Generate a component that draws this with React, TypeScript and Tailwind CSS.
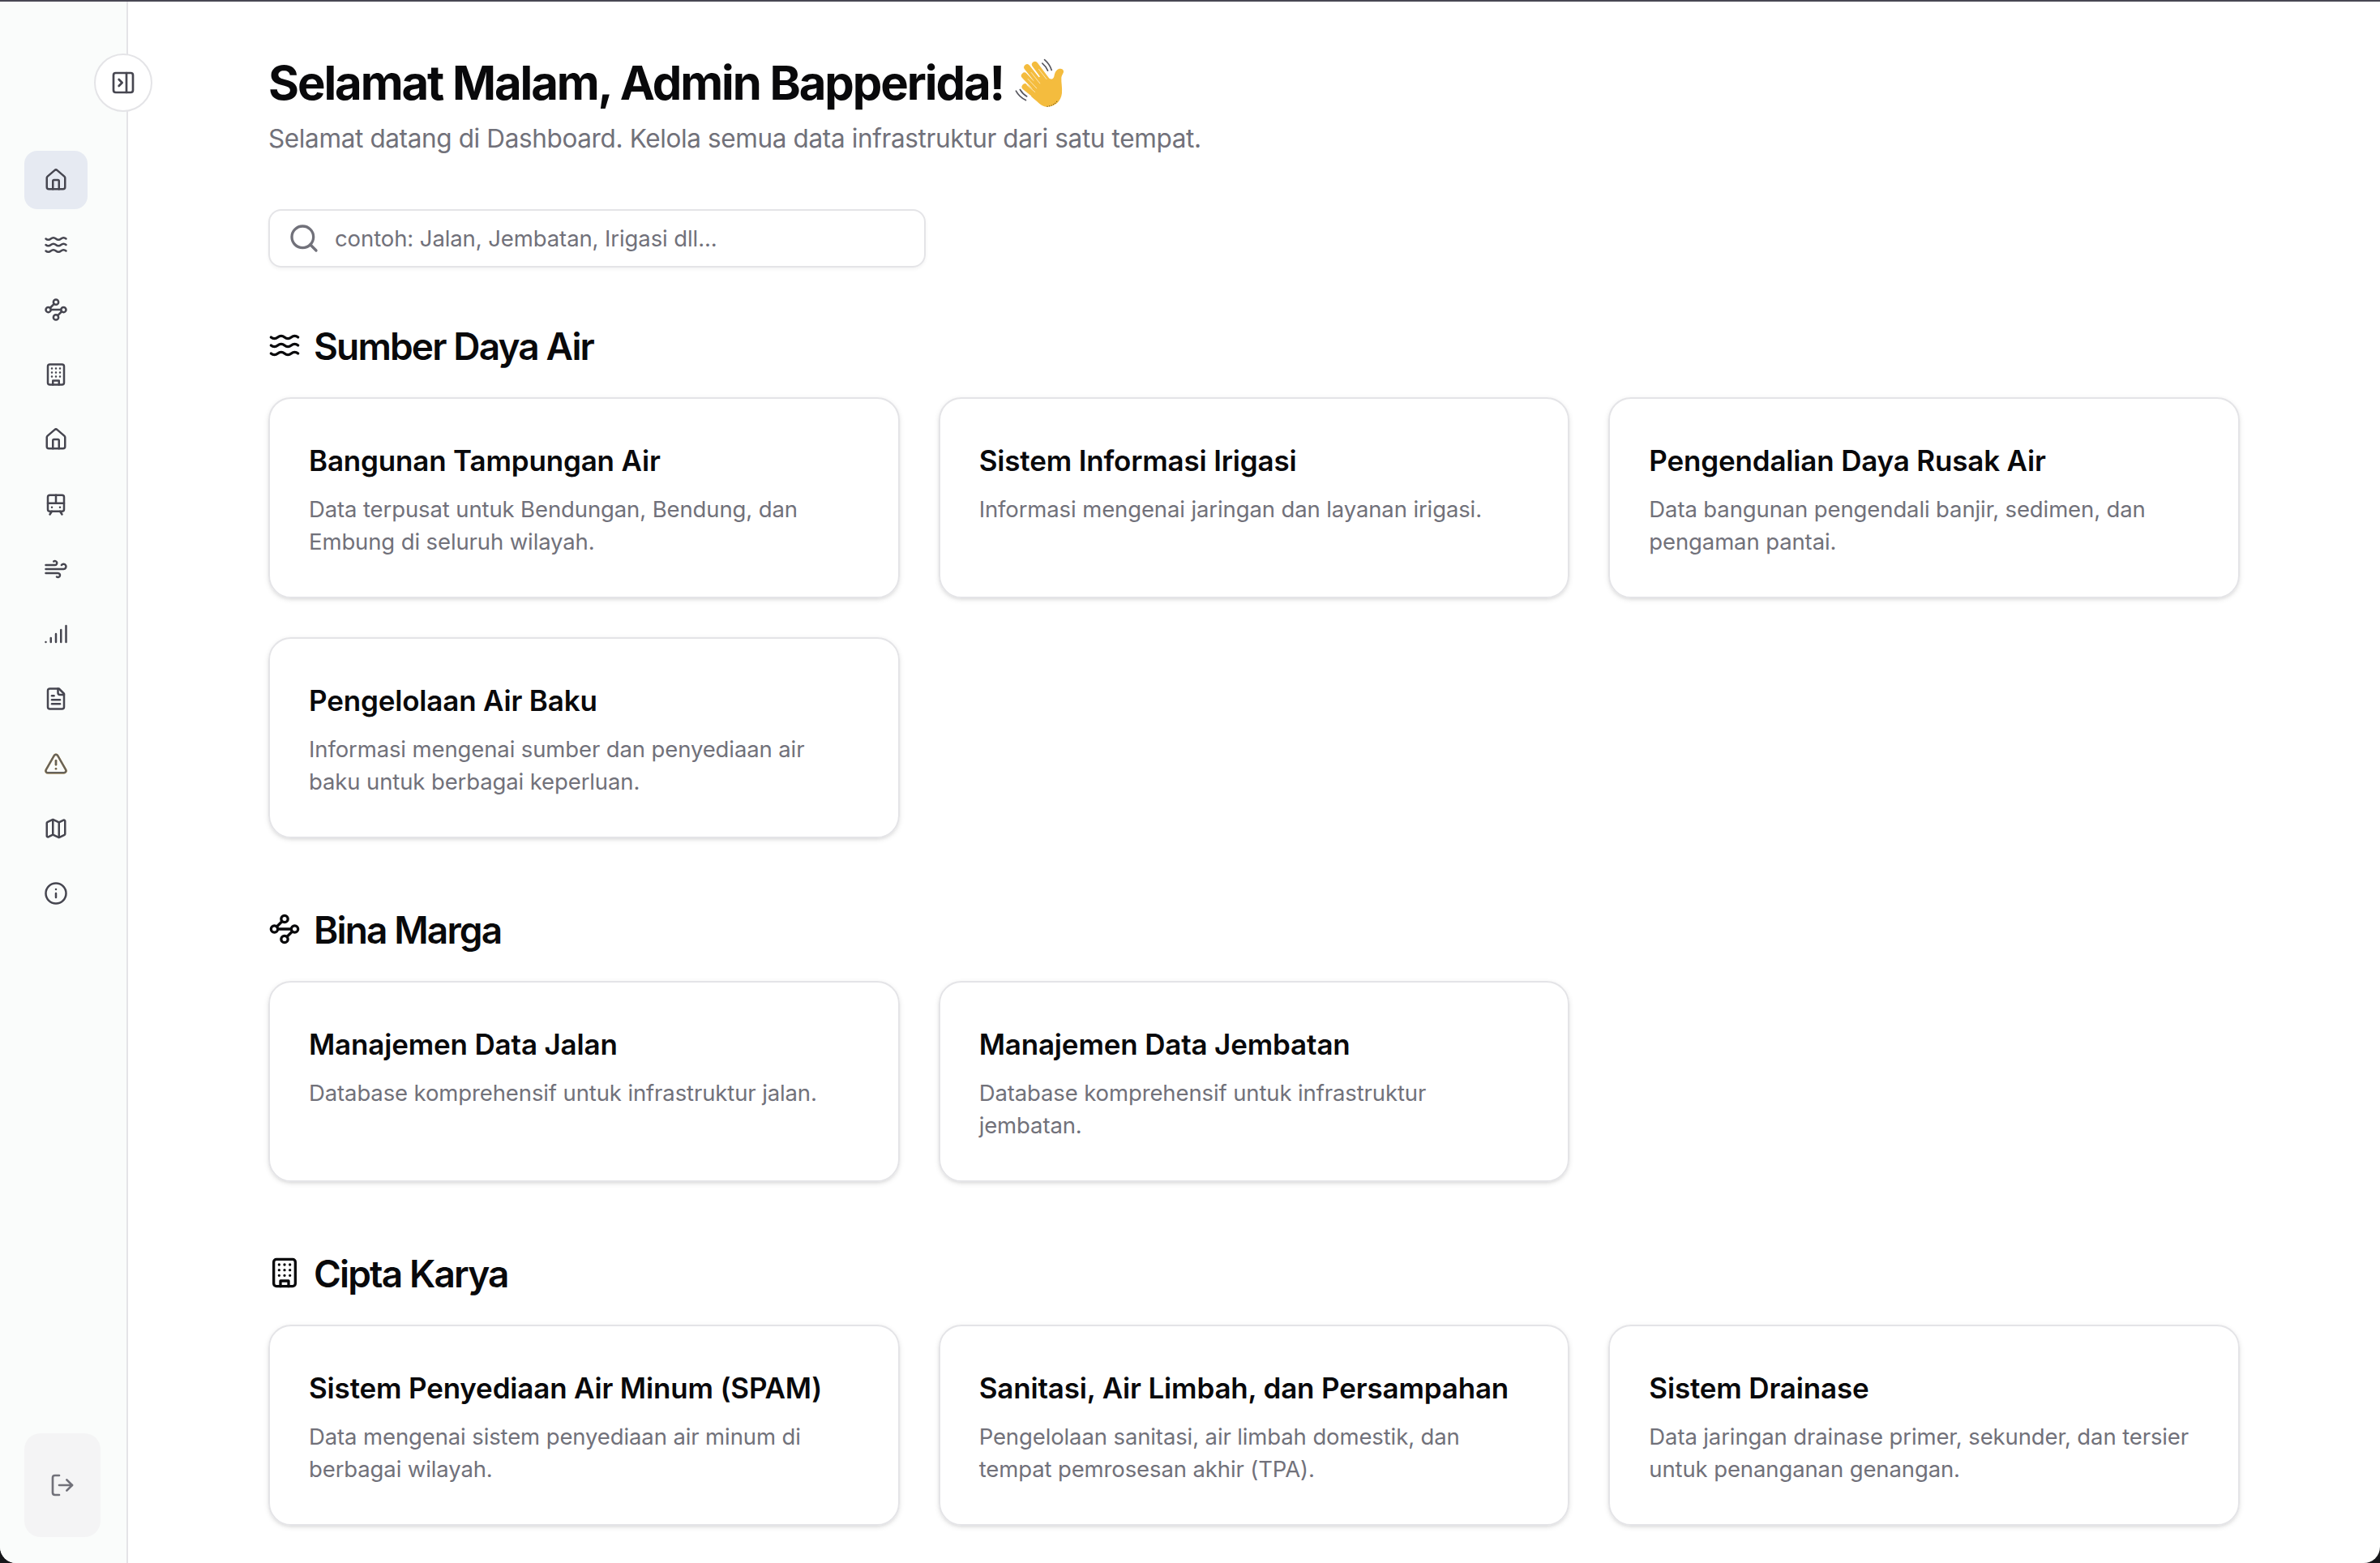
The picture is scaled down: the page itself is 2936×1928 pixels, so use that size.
import React from "react";
import { House, Waves, TramFront, Wind, Signal, TriangleAlert, Map as MapIcon, Info, LogOut, PanelRightClose, Search } from "lucide-react";

type IconProps = { size?: number; className?: string };

function Glyph({ size = 24, className, children }: IconProps & { children: React.ReactNode }) {
  return (
    <svg width={size} height={size} viewBox="0 0 24 24" fill="none" stroke="currentColor" strokeWidth="2" strokeLinecap="round" strokeLinejoin="round" className={className}>
      {children}
    </svg>
  );
}

const Waypoints = (p: IconProps) => (
  <Glyph {...p}>
    <circle cx="12" cy="4.5" r="2.5" />
    <path d="m10.2 6.3-3.9 3.9" />
    <circle cx="4.5" cy="12" r="2.5" />
    <path d="M7 12h10" />
    <circle cx="19.5" cy="12" r="2.5" />
    <path d="m13.8 17.7 3.9-3.9" />
    <circle cx="12" cy="19.5" r="2.5" />
  </Glyph>
);

const Building = (p: IconProps) => (
  <Glyph {...p}>
    <rect width="16" height="20" x="4" y="2" rx="2" />
    <path d="M9 22v-4h6v4" />
    <path d="M8 6h.01M16 6h.01M12 6h.01M12 10h.01M12 14h.01M16 10h.01M16 14h.01M8 10h.01M8 14h.01" />
  </Glyph>
);

const FileText = (p: IconProps) => (
  <Glyph {...p}>
    <path d="M15 2H6a2 2 0 0 0-2 2v16a2 2 0 0 0 2 2h12a2 2 0 0 0 2-2V7Z" />
    <path d="M14 2v4a2 2 0 0 0 2 2h4" />
    <path d="M10 9H8" />
    <path d="M16 13H8" />
    <path d="M16 17H8" />
  </Glyph>
);

const Warning = (p: IconProps) => (
  <TriangleAlert {...p} className="text-[#65625c] drop-shadow-[0.6px_0.8px_0px_#f5b02e]" />
);

const nav: React.ElementType[] = [House, Waves, Waypoints, Building, House, TramFront, Wind, Signal, FileText, Warning, MapIcon, Info];

type Card = { title: string; lines: string[] };
type Section = { title: string; icon: React.ElementType; cards: Card[] };

const sections: Section[] = [
  {
    title: "Sumber Daya Air",
    icon: Waves,
    cards: [
      { title: "Bangunan Tampungan Air", lines: ["Data terpusat untuk Bendungan, Bendung, dan", "Embung di seluruh wilayah."] },
      { title: "Sistem Informasi Irigasi", lines: ["Informasi mengenai jaringan dan layanan irigasi."] },
      { title: "Pengendalian Daya Rusak Air", lines: ["Data bangunan pengendali banjir, sedimen, dan", "pengaman pantai."] },
      { title: "Pengelolaan Air Baku", lines: ["Informasi mengenai sumber dan penyediaan air", "baku untuk berbagai keperluan."] },
    ],
  },
  {
    title: "Bina Marga",
    icon: Waypoints,
    cards: [
      { title: "Manajemen Data Jalan", lines: ["Database komprehensif untuk infrastruktur jalan."] },
      { title: "Manajemen Data Jembatan", lines: ["Database komprehensif untuk infrastruktur", "jembatan."] },
    ],
  },
  {
    title: "Cipta Karya",
    icon: Building,
    cards: [
      { title: "Sistem Penyediaan Air Minum (SPAM)", lines: ["Data mengenai sistem penyediaan air minum di", "berbagai wilayah."] },
      { title: "Sanitasi, Air Limbah, dan Persampahan", lines: ["Pengelolaan sanitasi, air limbah domestik, dan", "tempat pemrosesan akhir (TPA)."] },
      { title: "Sistem Drainase", lines: ["Data jaringan drainase primer, sekunder, dan tersier", "untuk penanganan genangan."] },
    ],
  },
];

function WavingHand() {
  return (
    <svg viewBox="44 32 182 182" className="h-[61px] w-[61px]" fill="none" strokeLinecap="round">
      <g stroke="#f4bc3e" strokeWidth="23">
        <path d="M118 55 L165 118" />
        <path d="M89 65 L142 132" />
        <path d="M79 96 L130 150" />
        <path d="M81 137 L130 176" />
      </g>
      <path d="M112 118 L150 88 L170 106 C178 111 186 108 188 99 C191 88 192 80 200 74 C208 67 222 69 223 79 C224 87 216 93 215 104 C214 120 219 138 217 160 C214 190 191 210 161 210 C144 210 130 194 104 172 Z" fill="#f4bc3e" />
      <path d="M132 72 L160 108 M104 84 L136 124 M92 108 L124 142 M88 130 L118 156" stroke="#fffaf0" strokeWidth="2" />
      <g stroke="#56565e" strokeWidth="5">
        <path d="M153 37 C166 48 174 60 179 75" />
        <path d="M145 50 C155 58 160 66 165 77" />
        <path d="M48 152 C57 169 67 178 84 186" />
        <path d="M63 147 C70 159 77 166 88 172" />
      </g>
      <path d="M163 209 C180 207 190 201 199 190" stroke="#5d4a1c" strokeWidth="3" strokeDasharray="1 7" />
    </svg>
  );
}

export default function App() {
  return (
    <div className="h-[1928px] w-[2936px] overflow-hidden bg-[#17171a] font-['Inter',sans-serif]">
      <div className="flex h-full flex-col overflow-hidden rounded-b-[20px] bg-white">
        <div className="h-[2px] shrink-0 bg-[#484753]" />
        <div className="flex min-h-0 flex-1">
          <aside className="relative flex w-[158px] shrink-0 flex-col border-r-2 border-[#e4e4e7] bg-[#fafcfb] pl-[30px] pt-[184px] text-[#464650]">
            <button className="absolute left-[116px] top-[64px] flex h-[72px] w-[72px] items-center justify-center rounded-full border-2 border-[#e4e4e7] bg-white">
              <PanelRightClose size={32} />
            </button>
            <nav className="flex flex-col gap-2">
              {nav.map((Icon, i) => (
                <a key={i} className={i === 0 ? "flex h-[72px] w-[78px] items-center justify-center rounded-2xl bg-[#e6eaf2]" : "flex h-[72px] w-[78px] items-center justify-center"}>
                  <Icon size={30} />
                </a>
              ))}
            </nav>
            <button className="mb-[32px] mt-auto flex h-[128px] w-[94px] items-center justify-center rounded-[20px] bg-[#f4f4f5] text-[#71717a]">
              <LogOut size={32} />
            </button>
          </aside>
          <main className="flex flex-col pl-[173px] pt-[64px]">
            <h1 className="flex h-[72px] items-center gap-[14px] whitespace-nowrap text-[58px] font-bold tracking-[-2.07px] text-[#09090b]">
              <span>Selamat Malam, Admin Bapperida!</span>
              <WavingHand />
            </h1>
            <p className="mt-1.5 h-[54px] whitespace-nowrap text-[31.5px] leading-[54px] tracking-[-0.37px] text-[#71717a]">Selamat datang di Dashboard. Kelola semua data infrastruktur dari satu tempat.</p>
            <div className="mt-[60px] flex h-[72px] w-[811px] items-center gap-[18px] rounded-2xl border-2 border-[#e4e4e7] pl-[22px] text-[27.5px] tracking-[-0.1px] text-[#71717a] shadow-[0_2px_4px_rgba(0,0,0,0.05)]">
              <Search size={40} />
              <span className="pt-0.5">contoh: Jalan, Jembatan, Irigasi dll...</span>
            </div>
            <div className="mt-[64px] flex flex-col gap-[80px]">
              {sections.map((s) => (
                <section key={s.title}>
                  <h2 className="flex h-[64px] items-center gap-4 text-[46px] font-semibold tracking-[-1.85px] text-[#09090b]">
                    <s.icon size={40} />
                    <span className="pt-0.5">{s.title}</span>
                  </h2>
                  <div className="mt-8 grid w-[2432px] grid-cols-3 gap-12">
                    {s.cards.map((c) => (
                      <article key={c.title} className="h-[248px] rounded-[28px] border-2 border-[#e4e4e7] p-12 shadow-[0_2px_6px_rgba(0,0,0,0.1),0_2px_4px_-2px_rgba(0,0,0,0.1)]">
                        <h3 className="h-[56px] whitespace-nowrap text-[35px] font-semibold leading-[56px] tracking-[-0.17px] text-[#09090b]">{c.title}</h3>
                        <p className="mt-3 whitespace-nowrap text-[27.5px] leading-[40px] tracking-[-0.12px] text-[#71717a]">
                          {c.lines.map((l) => <span key={l} className="block">{l}</span>)}
                        </p>
                      </article>
                    ))}
                  </div>
                </section>
              ))}
            </div>
          </main>
        </div>
      </div>
    </div>
  );
}
